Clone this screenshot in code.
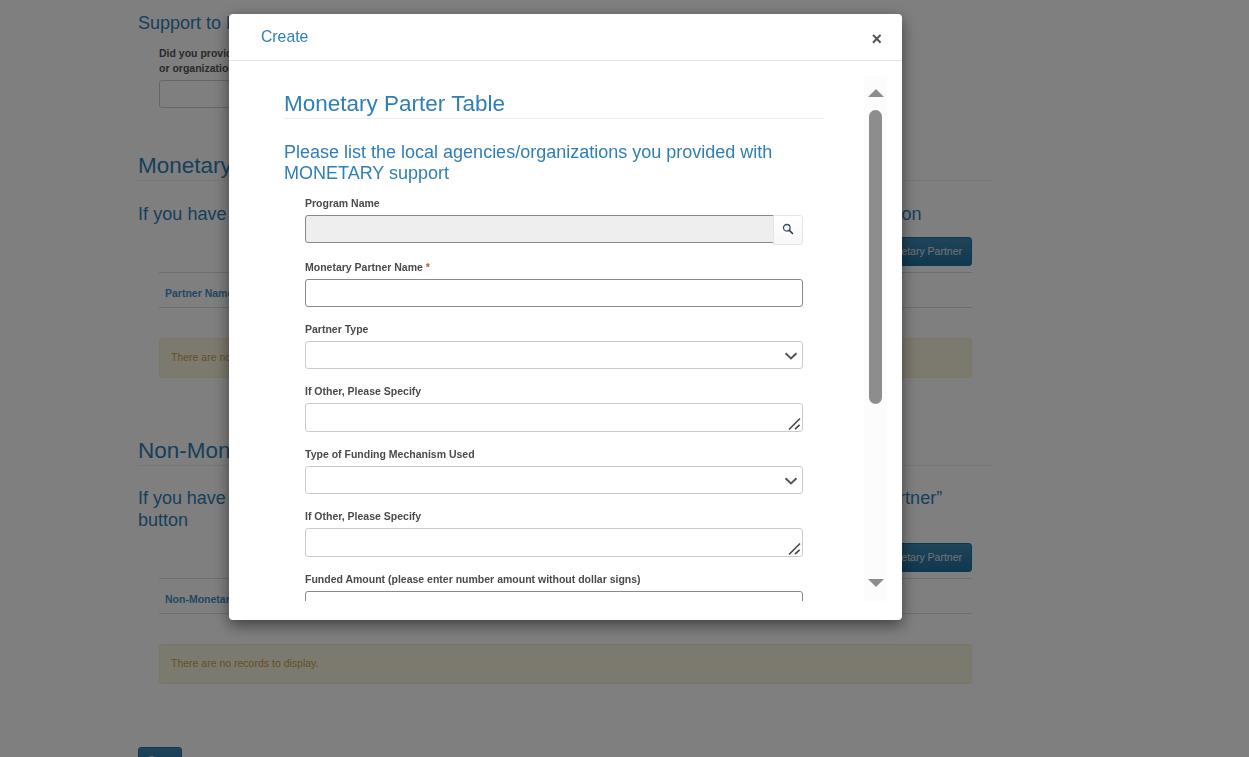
<div class="page">
  <h4 class="support">Support to Local Agencies and Organizations</h4>
  <div class="indent">
    <p class="ask">Did you provide monetary or non-monetary support to any local agencies<br />or organizations?</p>
    <input class="ask-input" type="text" />
  </div>

  <section class="block first">
    <h3>Monetary Partner Table</h3>
    <p class="lead">If you have provided monetary support, please click the “Add Partner” button to add all information</p>
    <div class="indent">
      <div class="action"><button class="primary">Add Monetary Partner</button></div>
      <div class="thead"><span>Partner Name</span></div>
      <div class="alert">There are no records to display.</div>
    </div>
  </section>

  <section class="block second">
    <h3>Non-Monetary Partner Table</h3>
    <p class="lead">If you have provided non-monetary support to agencies, please click the “Add Non-Monetary Partner” button</p>
    <div class="indent">
      <div class="action"><button class="primary">Add Non-Monetary Partner</button></div>
      <div class="thead"><span>Non-Monetary Partner Name</span></div>
      <div class="alert">There are no records to display.</div>
    </div>
  </section>

  <button class="primary save">Save</button>
</div>

<div class="backdrop"></div>

<div class="modal">
  <header class="modal-head">
    <span class="modal-title">Create</span>
    <span class="close">×</span>
  </header>
  <div class="modal-body">
    <div class="scroll">
      <h3 class="form-title">Monetary Parter Table</h3>
      <h4 class="form-sub">Please list the local agencies/organizations you provided with MONETARY support</h4>
      <div class="form">
        <div class="field">
          <label for="f1">Program Name</label>
          <div class="group">
            <input id="f1" class="dark grey" type="text" disabled />
            <span class="search">
              <svg width="12" height="12" viewBox="0 0 12 12"><circle cx="4.8" cy="4.8" r="3.3" fill="none" stroke="#2f4f73" stroke-width="1.3"/><path d="M7.3 7.3l3.2 3.2" stroke="#333" stroke-width="1.6" stroke-linecap="round"/></svg>
            </span>
          </div>
        </div>
        <div class="field">
          <label for="f2">Monetary Partner Name <em>*</em></label>
          <input id="f2" class="dark" type="text" />
        </div>
        <div class="field">
          <label for="f3">Partner Type</label>
          <div class="wrap">
            <select id="f3"><option></option></select>
            <svg class="chev" width="14" height="8" viewBox="0 0 14 8"><path d="M1.5 1.2L7 6.4l5.5-5.2" fill="none" stroke="#555" stroke-width="2"/></svg>
          </div>
        </div>
        <div class="field">
          <label for="f4">If Other, Please Specify</label>
          <div class="wrap">
            <textarea id="f4"></textarea>
            <svg class="grip" width="13" height="13" viewBox="0 0 13 13"><path d="M1 12.5L12 1.5M7 12.2l4.6-4.4" fill="none" stroke="#4a4a4a" stroke-width="1.6"/></svg>
          </div>
        </div>
        <div class="field">
          <label for="f5">Type of Funding Mechanism Used</label>
          <div class="wrap">
            <select id="f5"><option></option></select>
            <svg class="chev" width="14" height="8" viewBox="0 0 14 8"><path d="M1.5 1.2L7 6.4l5.5-5.2" fill="none" stroke="#555" stroke-width="2"/></svg>
          </div>
        </div>
        <div class="field">
          <label for="f6">If Other, Please Specify</label>
          <div class="wrap">
            <textarea id="f6"></textarea>
            <svg class="grip" width="13" height="13" viewBox="0 0 13 13"><path d="M1 12.5L12 1.5M7 12.2l4.6-4.4" fill="none" stroke="#4a4a4a" stroke-width="1.6"/></svg>
          </div>
        </div>
        <div class="field">
          <label for="f7">Funded Amount (please enter number amount without dollar signs)</label>
          <input id="f7" class="dark" type="text" />
        </div>
      </div>
    </div>
    <div class="track">
      <span class="arrow up"></span>
      <span class="thumb"></span>
      <span class="arrow down"></span>
    </div>
  </div>
</div>

<style>
  :global(body) {
    margin: 0;
    height: 757px;
    overflow: hidden;
    background: #fff;
    font-family: "Liberation Sans", Arial, sans-serif;
    color: #333;
  }
  * { box-sizing: border-box; }

  .page { width: 854px; margin-left: 138px; height: 757px; overflow: hidden; }
  .support { margin: 0; padding-top: 13px; font-size: 18px; line-height: 20px; font-weight: 400; color: #2f7fb5; }
  .indent { margin: 0 20px 0 21px; }
  .ask { margin: 13px 0 0; font-size: 10.5px; line-height: 15px; font-weight: 700; color: #555; }
  .ask-input { display: block; width: 300px; height: 28px; margin-top: 4px; border: 1px solid #ccc; border-radius: 3px; background: #fff; }

  .block h3 { margin: 0; padding-bottom: 1px; font-size: 22.5px; line-height: 27px; font-weight: 400; color: #2f7fb5; border-bottom: 1px solid #eee; }
  .first { margin-top: 44px; }
  .second { margin-top: 59px; }
  .lead { margin: 22px 0 0; font-size: 18px; line-height: 22px; color: #2f7fb5; }
  .first .lead { word-spacing: 0.2px; }
  .second .lead { margin-top: 21px; word-spacing: -0.1px; }
  .action { display: flex; justify-content: flex-end; margin-top: 12px; }
  .primary { height: 29px; padding: 0 9px 2px; border: 1px solid #1f6f9f; border-radius: 3px; background: linear-gradient(#3f8ab5, #1f6f9f); color: #e4e4e4; font: 10.5px "Liberation Sans", Arial, sans-serif; }
  .thead { margin-top: 6px; height: 36px; padding: 13px 6px 0; border-top: 1px solid #ddd; border-bottom: 1px solid #ddd; font-size: 10.5px; line-height: 14px; font-weight: 700; color: #3f90c8; }
  .alert { margin-top: 30px; height: 40px; padding: 12px 11px; border: 1px solid #f5ecc4; border-radius: 3px; background: #f9f4dc; font-size: 10.5px; line-height: 13px; color: #c5a050; }
  .save { display: block; width: 44px; height: 27px; margin-top: 63px; }

  .backdrop { position: fixed; inset: 0; background: rgba(0, 0, 0, 0.5); }

  .modal { position: fixed; left: 229px; top: 14px; width: 673px; height: 606px; background: #fff; border-radius: 4px; box-shadow: 0 5px 15px rgba(0, 0, 0, 0.5); overflow: hidden; }
  .modal-head { display: flex; justify-content: space-between; height: 47px; padding: 13px 20px 0 32px; border-bottom: 1px solid #e5e5e5; }
  .modal-title { font-size: 15.75px; line-height: 19px; color: #2f7fb5; }
  .close { margin-top: 2px; font-size: 18px; line-height: 20px; font-weight: 700; color: #555; }

  .modal-body { display: flex; align-items: flex-start; padding-top: 15px; }
  .scroll { width: 635px; height: 525px; padding: 14px 0 0 55px; overflow: hidden; flex: none; }
  .form-title { width: 540px; margin: 0; padding-bottom: 1px; font-size: 22.5px; line-height: 27px; font-weight: 400; color: #2f7fb5; border-bottom: 1px solid #eee; }
  .form-sub { width: 520px; margin: 23px 0 0; font-size: 18px; line-height: 21px; font-weight: 400; color: #2f7fb5; }
  .form { width: 498px; margin: 12px 0 0 21px; }

  .field { margin-bottom: 15px; }
  label { display: block; margin-bottom: 5px; font-size: 10.5px; line-height: 14px; font-weight: 700; color: #4a4a4a; }
  label em { font-style: normal; color: #c0562b; }
  input, select, textarea { display: block; width: 100%; height: 28px; border: 1px solid #ccc; border-radius: 3px; background: #fff; font: 12px "Liberation Sans", Arial, sans-serif; outline: none; }
  select { appearance: none; }
  textarea { height: 29px; resize: none; }
  .wrap { position: relative; }
  .chev { position: absolute; right: 5px; top: 11px; pointer-events: none; }
  .grip { position: absolute; right: 2px; top: 14px; pointer-events: none; }
  .dark { border-color: #8a8a8a; }
  .grey { background: #eee; border-top-right-radius: 0; border-bottom-right-radius: 0; }
  .group { display: flex; }
  .group input { flex: 1; min-width: 0; }
  .search { flex: none; display: flex; align-items: center; justify-content: center; width: 30px; height: 30px; margin-left: -1px; padding-bottom: 2px; border: 1px solid #e6e6e6; border-radius: 0 3px 3px 0; background: linear-gradient(#fff, #f7f7f7); }

  .track { position: relative; flex: none; width: 23px; height: 525px; background: #fcfcfc; }
  .thumb { position: absolute; left: 5px; top: 34px; width: 13px; height: 294px; border-radius: 7px; background: #8d8d8d; }
  .arrow { position: absolute; left: 4px; width: 0; height: 0; border-left: 8px solid transparent; border-right: 8px solid transparent; }
  .up { top: 13px; border-bottom: 8px solid #8d8d8d; }
  .down { top: 503px; border-top: 8px solid #8d8d8d; }
</style>
